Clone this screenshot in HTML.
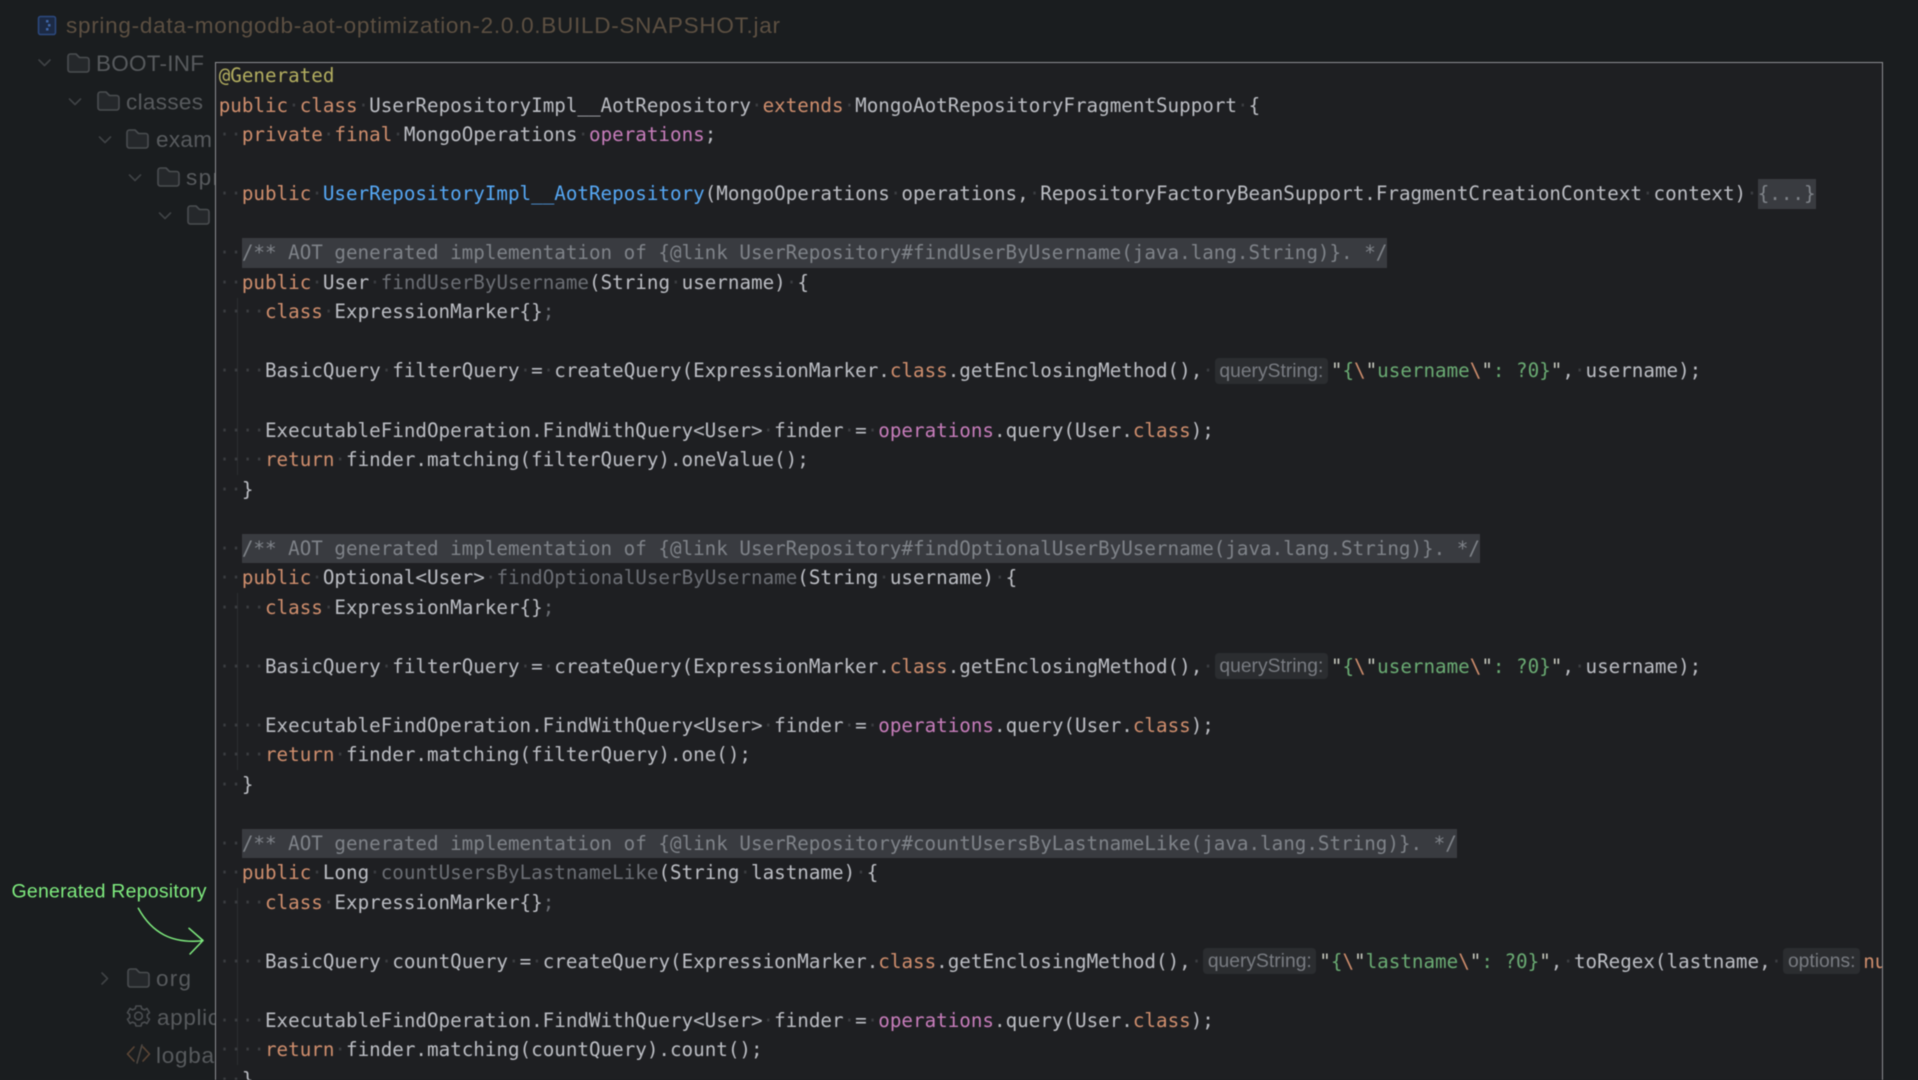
<!DOCTYPE html>
<html><head><meta charset="utf-8"><style>
html,body{margin:0;padding:0;background:#1a1d1f;width:1918px;height:1080px;overflow:hidden}
#root{position:absolute;left:0;top:0;width:1918px;height:1080px;overflow:hidden;filter:blur(.4px)}
svg.side{position:absolute;left:0;top:0}
#pop{position:absolute;left:215px;top:62px;width:1666px;height:1030px;background:#1e1f22;border:1.5px solid #8f9194;overflow:hidden}
#code{position:absolute;left:2.7px;top:-1.7px;font:19.23px/29.53px "DejaVu Sans Mono","Liberation Mono",monospace;color:#bcbec4;width:1700px}
.l{height:29.53px;white-space:pre}
i{font-style:normal;color:#3b3d41}
b{font-weight:normal}
.k{color:#cf8e6d}.a{color:#b3ae60}.f{color:#56a8f5}.v{color:#c77dbb}.g{color:#6c6f75}.s{color:#6aab73}.o{color:#cf8e6d}.q{color:#c6c8bd}
.c{display:inline-block;height:29.53px;background:#393b40;color:#7f8389;vertical-align:top}
.h{display:inline-block;height:26px;background:#2b2d30;border-radius:4px;color:#797c82;font:19.3px/28px "Liberation Sans",sans-serif;text-align:center;vertical-align:top;margin-top:1.5px;overflow:hidden}
.h1{width:113px;margin-left:1px;margin-right:3px}
.h2{width:77px;margin-left:1px;margin-right:3px}
.ig{position:absolute;left:21px;width:1px;background:#2c2e32}
</style></head><body><div id="root">
<svg class="side" width="1918" height="1080" viewBox="0 0 1918 1080" fill="none">
<g stroke="#4b4e51" stroke-width="1.6" stroke-linejoin="round" stroke-linecap="round" fill="#25282b">
<path d="M68 56.500a2.500 2.500 0 0 1 2.500-2.500h5.500l3.500 3.500h7a2.500 2.500 0 0 1 2.500 2.500v9.500a2.500 2.500 0 0 1-2.500 2.500h-16a2.500 2.500 0 0 1-2.500-2.500z"/>
<path d="M98 94.500a2.500 2.500 0 0 1 2.500-2.500h5.500l3.500 3.500h7a2.500 2.500 0 0 1 2.500 2.500v9.500a2.500 2.500 0 0 1-2.500 2.500h-16a2.500 2.500 0 0 1-2.500-2.500z"/>
<path d="M127 132.500a2.500 2.500 0 0 1 2.500-2.500h5.500l3.500 3.500h7a2.500 2.500 0 0 1 2.500 2.500v9.500a2.500 2.500 0 0 1-2.500 2.500h-16a2.500 2.500 0 0 1-2.500-2.500z"/>
<path d="M158 170.500a2.500 2.500 0 0 1 2.500-2.500h5.500l3.500 3.500h7a2.500 2.500 0 0 1 2.500 2.500v9.500a2.500 2.500 0 0 1-2.500 2.500h-16a2.500 2.500 0 0 1-2.500-2.500z"/>
<path d="M188 208.500a2.500 2.500 0 0 1 2.500-2.500h5.500l3.500 3.500h7a2.500 2.500 0 0 1 2.500 2.500v9.500a2.500 2.500 0 0 1-2.500 2.500h-16a2.500 2.500 0 0 1-2.500-2.500z"/>
<path d="M128 971.500a2.500 2.500 0 0 1 2.500-2.500h5.500l3.500 3.500h7a2.500 2.500 0 0 1 2.500 2.500v9.500a2.500 2.500 0 0 1-2.500 2.500h-16a2.500 2.500 0 0 1-2.500-2.500z"/>
<path fill="none" d="M39 60l5.500 5.500 5.500-5.500M69.500 99l5.500 5.500 5.500-5.500M99.500 137l5.500 5.500 5.500-5.500M129.500 175l5.500 5.500 5.500-5.500M159.500 213l5.500 5.500 5.500-5.500M102 973l5.500 5.500-5.500 5.500" stroke="#404346"/>
<circle fill="none" cx="138.500" cy="1016" r="3.800"/>
<path fill="none" d="M136 1006h5l.8 2.800 2.700 1.100 2.500-1.400 2.500 4.200-2.200 1.800v3l2.200 1.800-2.500 4.200-2.500-1.400-2.700 1.100-.8 2.800h-5l-.8-2.800-2.700-1.100-2.500 1.400-2.500-4.200 2.200-1.800v-3l-2.200-1.800 2.500-4.200 2.500 1.400 2.700-1.100z"/>
<path fill="none" d="M134 1047l-6.500 7 6.500 7M143 1047l6.500 7-6.500 7" stroke="#5c4636"/>
<path fill="none" d="M142 1045l-5 18" stroke="#4f4a45"/>
</g>
<rect x="38.500" y="16.500" width="17" height="18" rx="2" fill="#1c2a44" stroke="#2d4a80" stroke-width="1.500"/>
<path d="M46 20h2.500v2.500H46zM48 24h2.500v2.500H48zM46 28h2.500v2.500H46z" fill="#3f66a8"/>
<g font-family="'Liberation Sans',sans-serif" font-size="22.500" fill="#585b5e">
<text x="66" y="33" fill="#5d5042" textLength="714" lengthAdjust="spacing">spring-data-mongodb-aot-optimization-2.0.0.BUILD-SNAPSHOT.jar</text>
<text x="96" y="71" textLength="108">BOOT-INF</text>
<text x="126" y="109.500" textLength="77">classes</text>
<text x="156" y="147" textLength="56">exam</text>
<text x="186" y="185" textLength="34">spr</text>
<text x="156" y="986" textLength="35">org</text>
<text x="157" y="1025" textLength="62">applic</text>
<text x="156" y="1063" textLength="58">logba</text>
</g>
<text x="11.500" y="897.500" font-family="'Liberation Sans',sans-serif" font-size="19.500" fill="#7fec7f" textLength="195">Generated Repository</text>
<path d="M138.300 908.300C152 933 172 944 203 940.700M189 928.300L203 940.500 190 954" stroke="#7fec7f" stroke-width="1.500" fill="none" stroke-linecap="round" stroke-linejoin="round"/>
</svg>
<div id="pop">
<div class="ig" style="top:235px;height:177px"></div>
<div class="ig" style="top:530px;height:177px"></div>
<div class="ig" style="top:825px;height:177px"></div>
<div id="code">
<div class="l"><b class="a">@Generated</b></div>
<div class="l"><b class="k">public</b><i>·</i><b class="k">class</b><i>·</i>UserRepositoryImpl__AotRepository<i>·</i><b class="k">extends</b><i>·</i>MongoAotRepositoryFragmentSupport<i>·</i>{</div>
<div class="l"><i>··</i><b class="k">private</b><i>·</i><b class="k">final</b><i>·</i>MongoOperations<i>·</i><b class="v">operations</b>;</div>
<div class="l"></div>
<div class="l"><i>··</i><b class="k">public</b><i>·</i><b class="f">UserRepositoryImpl__AotRepository</b>(MongoOperations<i>·</i>operations,<i>·</i>RepositoryFactoryBeanSupport.FragmentCreationContext<i>·</i>context)<i>·</i><b class="c">{...}</b></div>
<div class="l"></div>
<div class="l"><i>··</i><b class="c">/** AOT generated implementation of {@link UserRepository#findUserByUsername(java.lang.String)}. */</b></div>
<div class="l"><i>··</i><b class="k">public</b><i>·</i>User<i>·</i><b class="g">findUserByUsername</b>(String<i>·</i>username)<i>·</i>{</div>
<div class="l"><i>····</i><b class="k">class</b><i>·</i>ExpressionMarker{}<b class="g">;</b></div>
<div class="l"></div>
<div class="l"><i>····</i>BasicQuery<i>·</i>filterQuery<i>·</i>=<i>·</i>createQuery(ExpressionMarker.<b class="k">class</b>.getEnclosingMethod(),<i>·</i><b class="h h1">queryString:</b><b class="q">"</b><b class="s">{</b><b class="o">\</b><b class="q">"</b><b class="s">username</b><b class="o">\</b><b class="q">"</b><b class="s">: ?0}</b><b class="q">"</b>,<i>·</i>username);</div>
<div class="l"></div>
<div class="l"><i>····</i>ExecutableFindOperation.FindWithQuery&lt;User&gt;<i>·</i>finder<i>·</i>=<i>·</i><b class="v">operations</b>.query(User.<b class="k">class</b>);</div>
<div class="l"><i>····</i><b class="k">return</b><i>·</i>finder.matching(filterQuery).oneValue();</div>
<div class="l"><i>··</i>}</div>
<div class="l"></div>
<div class="l"><i>··</i><b class="c">/** AOT generated implementation of {@link UserRepository#findOptionalUserByUsername(java.lang.String)}. */</b></div>
<div class="l"><i>··</i><b class="k">public</b><i>·</i>Optional&lt;User&gt;<i>·</i><b class="g">findOptionalUserByUsername</b>(String<i>·</i>username)<i>·</i>{</div>
<div class="l"><i>····</i><b class="k">class</b><i>·</i>ExpressionMarker{}<b class="g">;</b></div>
<div class="l"></div>
<div class="l"><i>····</i>BasicQuery<i>·</i>filterQuery<i>·</i>=<i>·</i>createQuery(ExpressionMarker.<b class="k">class</b>.getEnclosingMethod(),<i>·</i><b class="h h1">queryString:</b><b class="q">"</b><b class="s">{</b><b class="o">\</b><b class="q">"</b><b class="s">username</b><b class="o">\</b><b class="q">"</b><b class="s">: ?0}</b><b class="q">"</b>,<i>·</i>username);</div>
<div class="l"></div>
<div class="l"><i>····</i>ExecutableFindOperation.FindWithQuery&lt;User&gt;<i>·</i>finder<i>·</i>=<i>·</i><b class="v">operations</b>.query(User.<b class="k">class</b>);</div>
<div class="l"><i>····</i><b class="k">return</b><i>·</i>finder.matching(filterQuery).one();</div>
<div class="l"><i>··</i>}</div>
<div class="l"></div>
<div class="l"><i>··</i><b class="c">/** AOT generated implementation of {@link UserRepository#countUsersByLastnameLike(java.lang.String)}. */</b></div>
<div class="l"><i>··</i><b class="k">public</b><i>·</i>Long<i>·</i><b class="g">countUsersByLastnameLike</b>(String<i>·</i>lastname)<i>·</i>{</div>
<div class="l"><i>····</i><b class="k">class</b><i>·</i>ExpressionMarker{}<b class="g">;</b></div>
<div class="l"></div>
<div class="l"><i>····</i>BasicQuery<i>·</i>countQuery<i>·</i>=<i>·</i>createQuery(ExpressionMarker.<b class="k">class</b>.getEnclosingMethod(),<i>·</i><b class="h h1">queryString:</b><b class="q">"</b><b class="s">{</b><b class="o">\</b><b class="q">"</b><b class="s">lastname</b><b class="o">\</b><b class="q">"</b><b class="s">: ?0}</b><b class="q">"</b>,<i>·</i>toRegex(lastname,<i>·</i><b class="h h2">options:</b><b class="k">null</b>));</div>
<div class="l"></div>
<div class="l"><i>····</i>ExecutableFindOperation.FindWithQuery&lt;User&gt;<i>·</i>finder<i>·</i>=<i>·</i><b class="v">operations</b>.query(User.<b class="k">class</b>);</div>
<div class="l"><i>····</i><b class="k">return</b><i>·</i>finder.matching(countQuery).count();</div>
<div class="l"><i>··</i>}</div>
</div>
</div>
</div></body></html>
